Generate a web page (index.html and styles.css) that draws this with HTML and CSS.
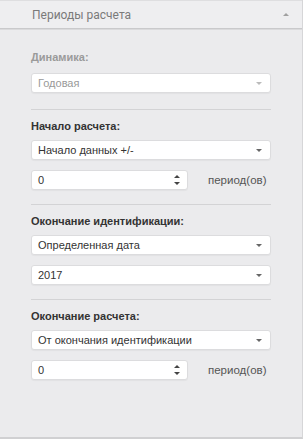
FILE: index.html
```html
<!DOCTYPE html>
<html lang="ru">
<head>
<meta charset="utf-8">
<link rel="stylesheet" href="styles.css">
</head>
<body>
<div class="panel">
  <div class="header">
    <span class="header-title">Периоды расчета</span>
    <span class="header-caret"></span>
  </div>
  <div class="content">
    <div class="section section-first">
      <div class="label label-disabled">Динамика:</div>
      <div class="select select-disabled"><span>Годовая</span><span class="arrow"></span></div>
    </div>
    <div class="section">
      <div class="label">Начало расчета:</div>
      <div class="select"><span>Начало данных +/-</span><span class="arrow"></span></div>
      <div class="num-row">
        <div class="num"><span>0</span><span class="spin"><span class="up"></span><span class="down"></span></span></div>
        <span class="unit">период(ов)</span>
      </div>
    </div>
    <div class="section">
      <div class="label">Окончание идентификации:</div>
      <div class="select"><span>Определенная дата</span><span class="arrow"></span></div>
      <div class="select"><span>2017</span><span class="arrow"></span></div>
    </div>
    <div class="section section-last">
      <div class="label">Окончание расчета:</div>
      <div class="select"><span>От окончания идентификации</span><span class="arrow"></span></div>
      <div class="num-row">
        <div class="num"><span>0</span><span class="spin"><span class="up"></span><span class="down"></span></span></div>
        <span class="unit">период(ов)</span>
      </div>
    </div>
  </div>
</div>
</body>
</html>
```
FILE: styles.css
```css
html, body {
  margin: 0;
  padding: 0;
  background: #ebebed;
}
.panel {
  width: 302px;
  height: 437px;
  background: #ebebed;
  border-right: 1px solid #d6d6d8;
  border-bottom: 2px solid #d0d0d2;
  font-family: "Liberation Sans", Arial, sans-serif;
  font-size: 11px;
  color: #333;
}
.header {
  height: 29px;
  box-sizing: border-box;
  border-top: 1px solid #dedee0;
  border-bottom: 1px solid #c9c9cb;
  box-shadow: 0 1px 0 #dadadc;
  background: #eeeef0;
  display: flex;
  align-items: center;
  justify-content: space-between;
  padding: 0 13px 0 32px;
}
.header-title {
  font-family: Roboto, "Liberation Sans", sans-serif;
  font-size: 12px;
  color: #7a7a7a;
}
.header-caret {
  width: 0;
  height: 0;
  border-left: 3px solid transparent;
  border-right: 3px solid transparent;
  border-bottom: 3px solid #a0a0a0;
}
.content {
  padding: 0 31px;
}
.section {
  display: flex;
  flex-direction: column;
  gap: 10px;
  padding: 8px 0 14px;
  border-bottom: 1px solid #d3d3d5;
}
.section-first {
  padding-top: 20px;
  padding-bottom: 16px;
}
.section-last {
  border-bottom: none;
}
.label {
  font-weight: bold;
  line-height: 16px;
  color: #333;
  margin-bottom: -4px;
}
.section-first .label {
  margin-bottom: -2px;
}
.label-disabled {
  color: #9a9a9a;
}
.select, .num {
  height: 20px;
  box-sizing: border-box;
  background: #fff;
  border: 1px solid #dcdcde;
  border-radius: 3px;
  box-shadow: 0 1px 1px rgba(0,0,0,0.04);
  display: flex;
  align-items: center;
  justify-content: space-between;
  padding: 0 8px 0 6px;
  color: #333;
}
.select-disabled {
  color: #999;
}
.arrow {
  width: 0;
  height: 0;
  border-left: 3px solid transparent;
  border-right: 3px solid transparent;
  border-top: 3px solid #666;
}
.select-disabled .arrow {
  border-top-color: #bbb;
}
.num-row {
  display: flex;
  align-items: center;
}
.num {
  width: 157px;
  padding-right: 7px;
}
.spin {
  display: flex;
  flex-direction: column;
  gap: 4px;
}
.up, .down {
  width: 0;
  height: 0;
  border-left: 3px solid transparent;
  border-right: 3px solid transparent;
}
.up {
  border-bottom: 3px solid #444;
}
.down {
  border-top: 3px solid #444;
}
.unit {
  margin-left: 20px;
  font-size: 11.5px;
  color: #555;
}
```
